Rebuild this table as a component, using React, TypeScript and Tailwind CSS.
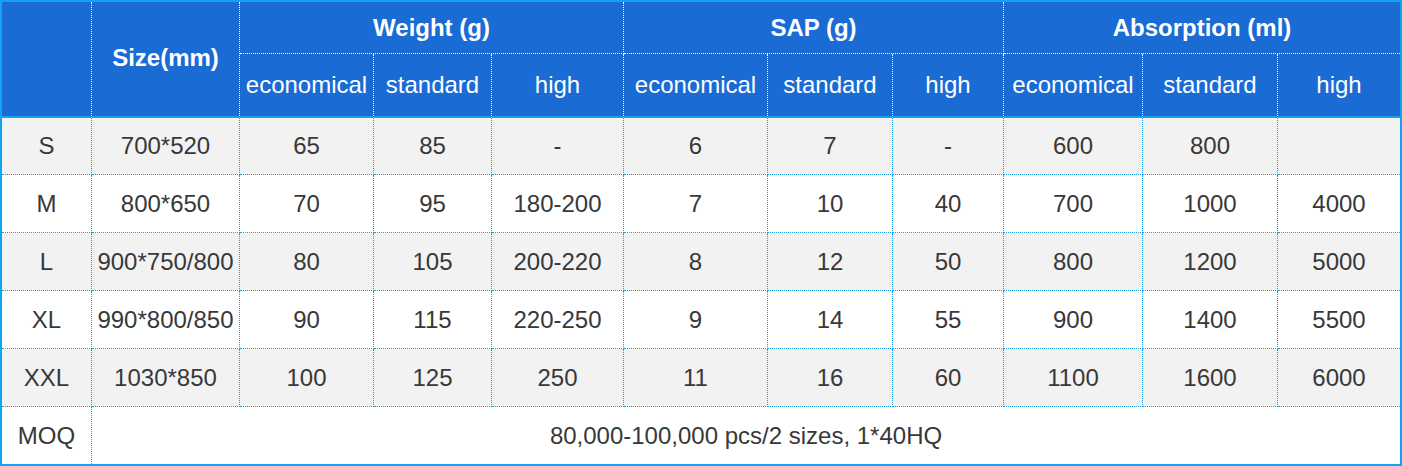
import React from "react";

const rows: string[][] = [
  ["S", "700*520", "65", "85", "-", "6", "7", "-", "600", "800", ""],
  ["M", "800*650", "70", "95", "180-200", "7", "10", "40", "700", "1000", "4000"],
  ["L", "900*750/800", "80", "105", "200-220", "8", "12", "50", "800", "1200", "5000"],
  ["XL", "990*800/850", "90", "115", "220-250", "9", "14", "55", "900", "1400", "5500"],
  ["XXL", "1030*850", "100", "125", "250", "11", "16", "60", "1100", "1600", "6000"],
];

const sub = ["economical", "standard", "high"];

export default function App() {
  return (
    <div
      className="w-[1402px] h-[466px] bg-white"
      style={{ fontFamily: '"Liberation Sans", Arial, sans-serif' }}
    >
      <div className="border-2 border-[#12a3ee] grid grid-cols-[90px_148px_134px_118px_132px_144px_125px_111px_139px_135px_122px] grid-rows-[52px_64px_57px_58px_58px_58px_58px_57px] text-[24px] leading-none">
        {/* header row 1 */}
        <div className="row-span-2 bg-[#1a6bd3] border-r border-dotted border-r-white border-b-2 border-b-[#12a3ee]" style={{ borderBottomStyle: "solid" }} />
        <div className="row-span-2 bg-[#1a6bd3] border-r border-dotted border-r-white border-b-2 border-b-[#12a3ee] flex items-center justify-center font-bold text-white pb-[2px]" style={{ borderBottomStyle: "solid" }}>
          Size(mm)
        </div>
        <div className="col-span-3 bg-[#1a6bd3] border-r border-b border-dotted border-white flex items-center justify-center font-bold text-white">
          Weight (g)
        </div>
        <div className="col-span-3 bg-[#1a6bd3] border-r border-b border-dotted border-white flex items-center justify-center font-bold text-white">
          SAP (g)
        </div>
        <div className="col-span-3 bg-[#1a6bd3] border-b border-dotted border-white flex items-center justify-center font-bold text-white">
          Absorption (ml)
        </div>
        {/* header row 2 */}
        {[0, 1, 2].flatMap((g) =>
          sub.map((s, i) => {
            const last = g === 2 && i === 2;
            return (
              <div
                key={`h-${g}-${i}`}
                className={
                  "bg-[#1a6bd3] text-white flex items-center justify-center border-b-2 border-b-[#12a3ee] " +
                  (last ? "" : "border-r border-r-white")
                }
                style={{ borderRightStyle: "dotted", borderBottomStyle: "solid" }}
              >
                {s}
              </div>
            );
          })
        )}
        {/* body */}
        {rows.flatMap((r, ri) =>
          r.map((c, ci) => {
            const lastCol = ci === r.length - 1;
            return (
              <div
                key={`r-${ri}-${ci}`}
                className={
                  "flex items-center justify-center text-[#383838] border-b border-dotted border-[#1a9be6] " +
                  (ri % 2 === 0 ? "bg-[#f2f2f2] " : "bg-white ") +
                  (lastCol ? "" : "border-r")
                }
              >
                {c}
              </div>
            );
          })
        )}
        <div className="flex items-center justify-center text-[#383838] border-r border-dotted border-[#1a9be6] bg-white">
          MOQ
        </div>
        <div className="col-span-10 flex items-center justify-center text-[#383838] bg-white">
          80,000-100,000 pcs/2 sizes, 1*40HQ
        </div>
      </div>
    </div>
  );
}
